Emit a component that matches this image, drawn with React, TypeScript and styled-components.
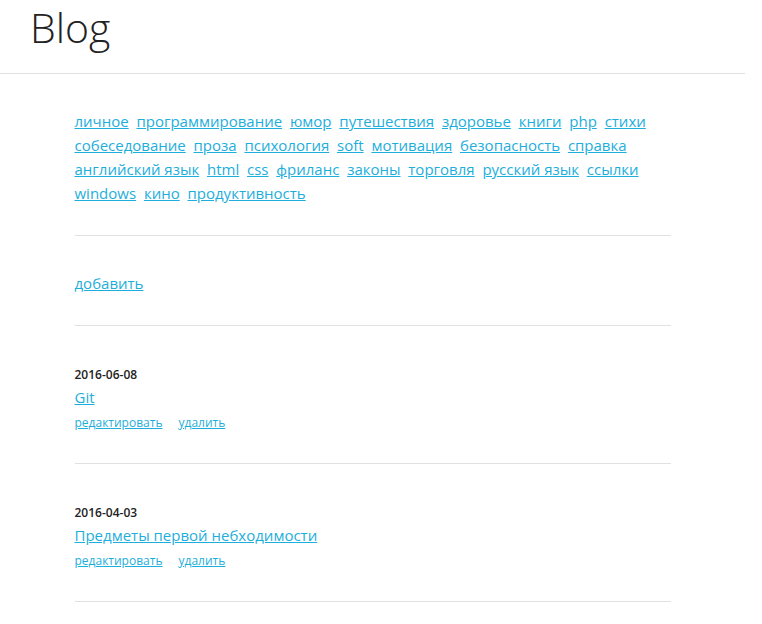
import React, { Fragment } from "react";
import styled, { createGlobalStyle } from "styled-components";

const GlobalStyle = createGlobalStyle`
  body { margin: 0; background: #fff; color: #222; font-family: "Open Sans", sans-serif; font-size: 15px; line-height: 24px; }
`;

const Page = styled.div`
  padding-right: 17px;
`;

const Header = styled.header`
  padding: 0 30px 18px;
  border-bottom: 1px solid #e1e1e1;
`;

const Title = styled.h1`
  margin: 0;
  font-size: 41px;
  line-height: 55px;
  font-weight: 300;
`;

const Content = styled.main`
  padding: 0 10%;
`;

const Section = styled.section`
  padding: 35px 0 30px;
  border-bottom: 1px solid #e1e1e1;
`;

const Link = styled.a`
  color: #1eaedb;
  text-decoration: underline;
`;

const Post = styled.article`
  padding: 38px 0 26px;
  border-bottom: 1px solid #e1e1e1;
`;

const PostDate = styled.time`
  display: block;
  font-size: 12px;
  line-height: 22px;
  font-weight: 600;
`;

const PostTitle = styled.h2`
  margin: 0;
  font-size: 15px;
  line-height: 22px;
  font-weight: 400;
`;

const Actions = styled.div`
  display: flex;
  gap: 16px;
  font-size: 12px;
  line-height: 29px;
`;

const tags = [
  "личное", "программирование", "юмор", "путешествия", "здоровье", "книги", "php", "стихи",
  "собеседование", "проза", "психология", "soft", "мотивация", "безопасность", "справка",
  "английский язык", "html", "css", "фриланс", "законы", "торговля", "русский язык", "ссылки",
  "windows", "кино", "продуктивность",
];

const posts = [
  { date: "2016-06-08", title: "Git" },
  { date: "2016-04-03", title: "Предметы первой небходимости" },
];

export default function App() {
  return (
    <>
      <GlobalStyle />
      <Page>
        <Header>
          <Title>Blog</Title>
        </Header>
        <Content>
          <Section as="nav">
            {tags.map((tag) => (
              <Fragment key={tag}>
                <Link href="#">{tag}</Link>
                {"\u00a0 "}
              </Fragment>
            ))}
          </Section>
          <Section>
            <Link href="#">добавить</Link>
          </Section>
          {posts.map((post) => (
            <Post key={post.date}>
              <PostDate dateTime={post.date}>{post.date}</PostDate>
              <PostTitle>
                <Link href="#">{post.title}</Link>
              </PostTitle>
              <Actions>
                <Link href="#">редактировать</Link>
                <Link href="#">удалить</Link>
              </Actions>
            </Post>
          ))}
        </Content>
      </Page>
    </>
  );
}
